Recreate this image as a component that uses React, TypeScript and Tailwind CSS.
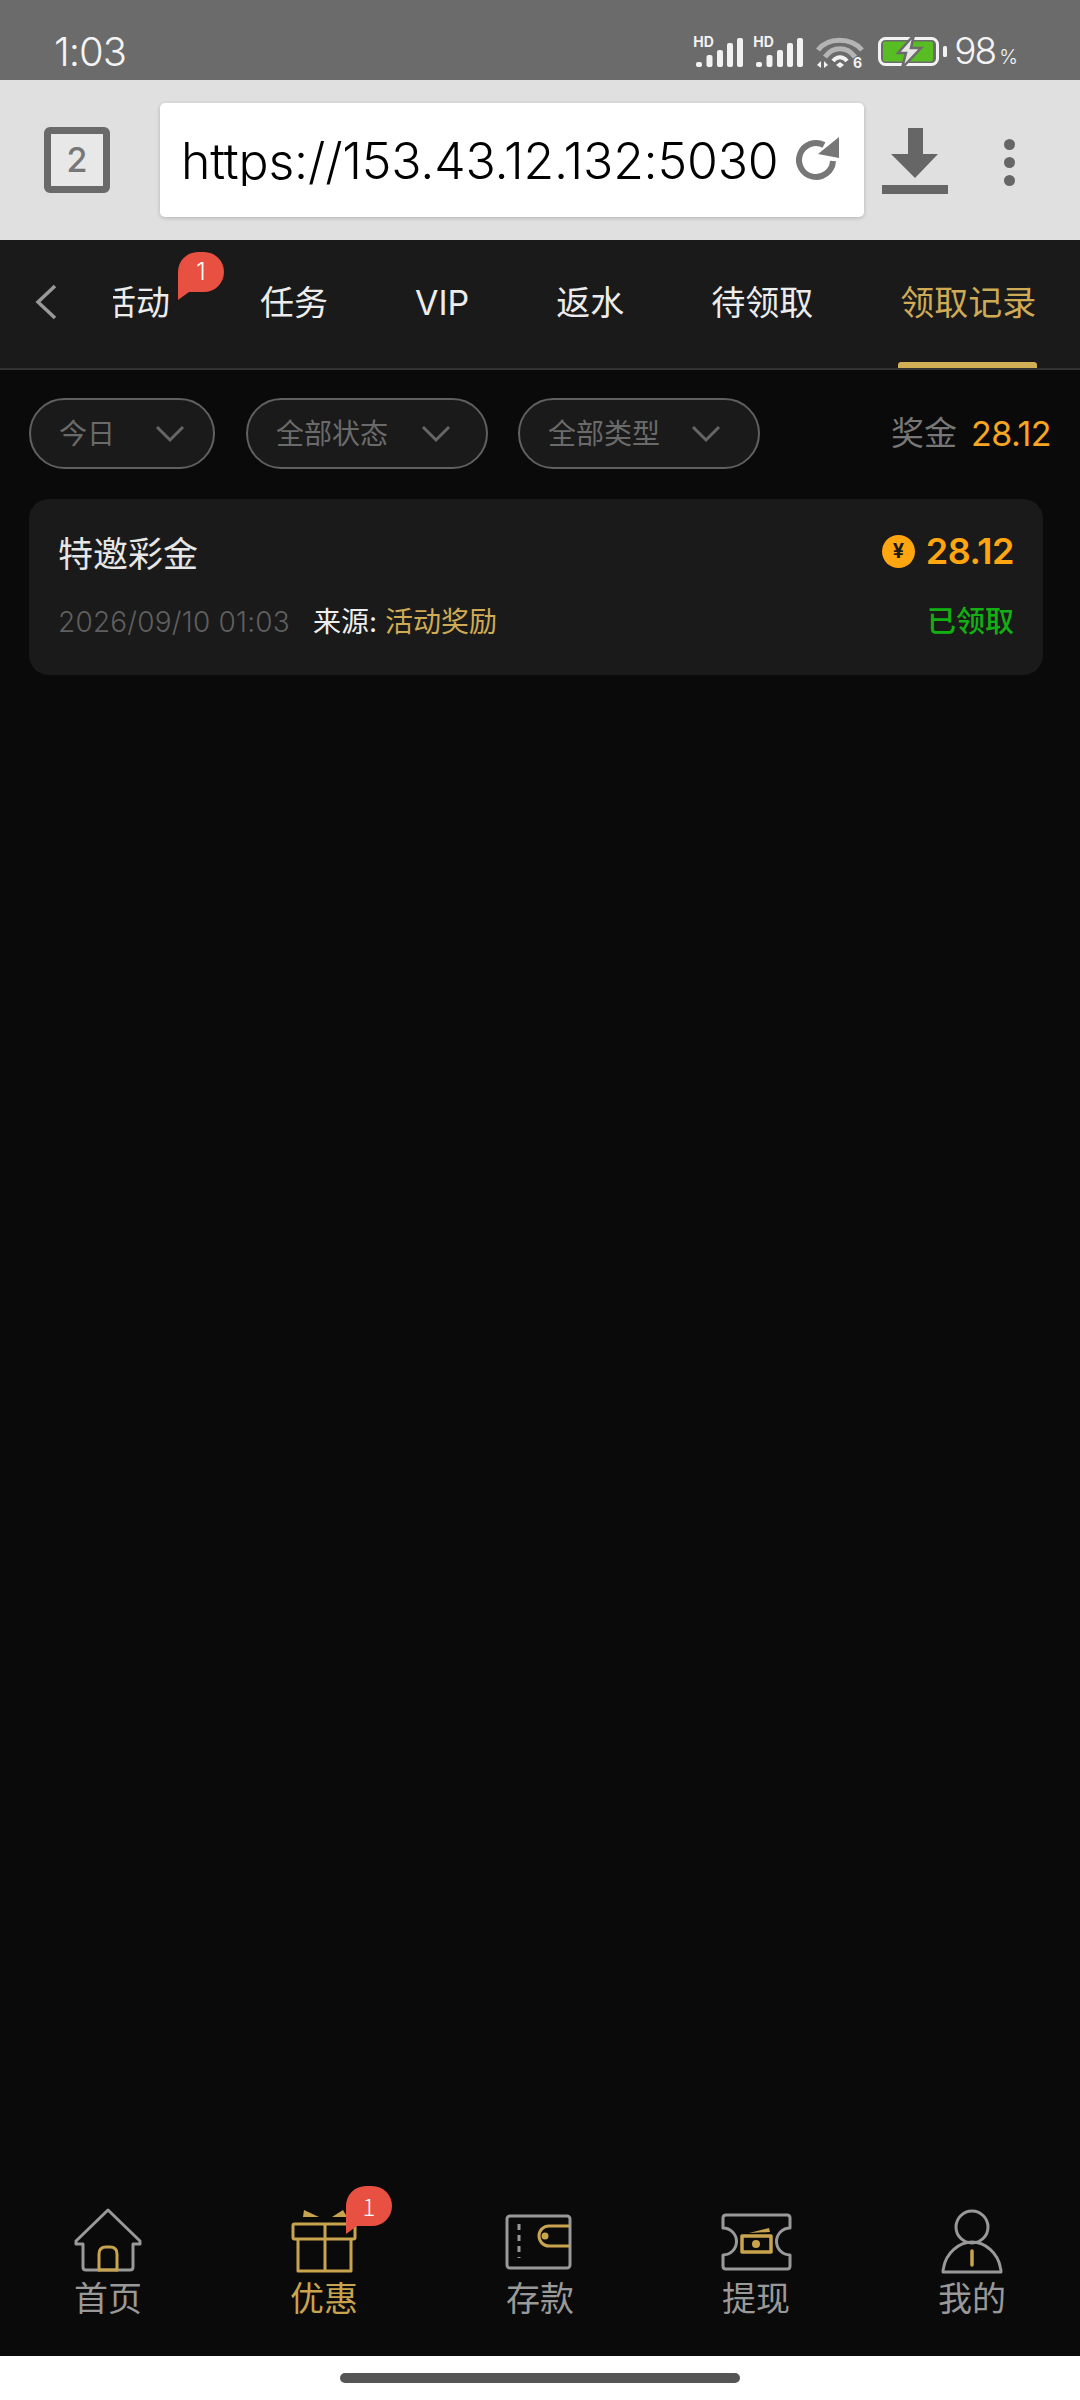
const latin = 'font-["Inter","Noto_Sans_CJK_SC",sans-serif]';

function Bubble({ className }: { className: string }) {
  return (
    <div className={`absolute w-[46px] h-[48px] ${className}`}>
      <svg width="46" height="48" viewBox="0 0 46 48" className="block">
        <path d="M0 48V20A20 20 0 0 1 20 0H26A20 20 0 0 1 46 20A20 20 0 0 1 26 40H11Z" fill="#e85141" />
      </svg>
      <span className="absolute left-0 top-0 w-[46px] h-[40px] flex items-center justify-center text-white text-[24px] leading-none font-light">1</span>
    </div>
  );
}

function Signal() {
  return (
    <div className="relative w-[50px] h-[32px]">
      <span className="absolute left-[0px] top-[0px] text-[14px] leading-[12px] font-bold text-[#f2f2f2] font-['Inter',sans-serif]">HD</span>
      <svg width="50" height="32" viewBox="0 0 50 32" className="block">
        <g fill="#f2f2f2">
          <rect x="3" y="26" width="6" height="5" rx="2" />
          <rect x="13.500" y="19" width="6" height="12" rx="2" />
          <rect x="24" y="14" width="6" height="17" rx="2" />
          <rect x="34" y="7" width="6" height="24" rx="2" />
          <rect x="44" y="2" width="6" height="29" rx="2" />
        </g>
      </svg>
    </div>
  );
}

function StatusBar() {
  return (
    <div className={`h-[80px] bg-[#6b6b6b] flex items-start justify-between pt-[31px] pl-[54px] pr-[62px] ${latin}`}>
      <span className="text-[40px] leading-[42px] font-light text-[#f4f4f4] tracking-[-1px]">1:03</span>
      <div className="flex items-start pt-[5px]">
        <Signal />
        <div className="ml-[10px]"><Signal /></div>
        <svg width="48" height="34" viewBox="0 0 48 34" className="block ml-[13px] mt-[-1px]">
          <path d="M2 15C12 2 35 2 46 15" fill="none" stroke="#b4b4b4" strokeWidth="5" />
          <path d="M9 22C17 11 31 11 39 22" fill="none" stroke="#b4b4b4" strokeWidth="5" />
          <path d="M17 26C21 21 27 21 31 26" fill="none" stroke="#f2f2f2" strokeWidth="4" />
          <path d="M20 30L24 27L28 30L24 33Z" fill="#f2f2f2" />
          <path d="M1 30L5 26V33ZM8 33V26L12 30Z" fill="#f2f2f2" />
          <text x="37" y="33" fontSize="14" fontWeight="700" fill="#f2f2f2">6</text>
        </svg>
        <svg width="69" height="33" viewBox="0 0 69 33" className="block ml-[14px] mt-[-1px]">
          <rect x="1.500" y="3.500" width="58" height="26" rx="6" fill="none" stroke="#f2f2f2" strokeWidth="3" />
          <rect x="5" y="6.500" width="50" height="20" rx="2" fill="#58bd22" />
          <rect x="65" y="11" width="4" height="11" rx="1.500" fill="#f2f2f2" />
          <path d="M36 0L20 18H28L24 33L43 13H33Z" fill="#e6e6e6" stroke="#6b6b6b" strokeWidth="2.500" />
        </svg>
        <span className="text-[37px] leading-[36px] font-light text-[#f4f4f4] whitespace-nowrap ml-[7px] mt-[-3px] tracking-[-2px]">
          98<span className="text-[20px] ml-[4px] tracking-normal">%</span>
        </span>
      </div>
    </div>
  );
}

function Toolbar() {
  return (
    <div className={`h-[160px] bg-[#e0e0e0] flex items-center ${latin}`}>
      <div className="ml-[44px] w-[66px] h-[66px] border-[7px] border-[#6a6a6a] rounded-[6px] flex items-center justify-center bg-[#e8e8e8]">
        <span className="text-[34px] leading-none font-medium text-[#777]">2</span>
      </div>
      <div className="ml-[50px] w-[704px] h-[114px] bg-white rounded-[5px] shadow-[0_1px_4px_rgba(0,0,0,0.2)] flex items-center pl-[21px] pr-[24px] overflow-hidden">
        <span className="flex-1 text-[50px] leading-none text-black whitespace-nowrap overflow-hidden font-light tracking-[-0.2px] pt-[2px]">https://153.43.12.132:5030</span>
        <svg width="46" height="46" viewBox="0 0 46 46" className="block shrink-0 ml-[16px]">
          <path d="M39 24A17 17 0 1 1 30 8" fill="none" stroke="#777" strokeWidth="6" />
          <path d="M24 17L45 0V21Z" fill="#777" />
        </svg>
      </div>
      <svg width="68" height="68" viewBox="0 0 68 68" className="block ml-[17px] mt-[4px]">
        <path d="M27 0H42V26H57L34 50L10 26H27Z" fill="#666" />
        <rect x="1" y="57" width="66" height="9" fill="#666" />
      </svg>
      <div className="ml-[55px] flex flex-col gap-[7px] mt-[5px]">
        <span className="w-[11px] h-[11px] rounded-full bg-[#666]" />
        <span className="w-[11px] h-[11px] rounded-full bg-[#666]" />
        <span className="w-[11px] h-[11px] rounded-full bg-[#666]" />
      </div>
    </div>
  );
}

const tabs = ["任务", "VIP", "返水", "待领取"];

function TabNav() {
  return (
    <div className={`relative h-[130px] bg-[#1a1a1a] border-b-2 border-[#333] flex ${latin}`}>
      <div className="w-[113px] shrink-0 flex items-center pl-[34px] pb-[4px]">
        <svg width="24" height="36" viewBox="0 0 24 36" className="block">
          <path d="M21 2L4 18L21 34" fill="none" stroke="#999" strokeWidth="3.500" />
        </svg>
      </div>
      <div className="flex-1 overflow-hidden flex h-[128px] text-[34px] leading-none text-[#ececec] font-normal pr-[40px]">
        <div className="relative ml-[-11px] w-[68px] shrink-0 flex items-center justify-center pb-[2px] whitespace-nowrap">活动</div>
        <div className="flex gap-[87px] ml-[90px]">
          {tabs.map((t) => (
            <div key={t} className="flex items-center pb-[2px] whitespace-nowrap">{t}</div>
          ))}
          <div className="relative flex items-center pb-[2px] whitespace-nowrap text-[#cfab55]">
            领取记录
            <span className="absolute left-[-2px] right-[-1px] bottom-0 h-[6px] rounded-t-[3px] bg-[#d2ae55]" />
          </div>
        </div>
      </div>
      <Bubble className="left-[178px] top-[12px]" />
    </div>
  );
}

function Chevron() {
  return (
    <svg width="30" height="18" viewBox="0 0 30 18" className="block">
      <path d="M2 2L15 15L28 2" fill="none" stroke="#666" strokeWidth="3" />
    </svg>
  );
}

function Pill({ label, width, gap }: { label: string; width: string; gap: string }) {
  return (
    <div className={`${width} h-[71px] rounded-full border-2 border-[#606060] bg-[#1a1a1a] flex items-center pl-[28px]`}>
      <span className="text-[28px] leading-none text-[#6a6a6a] font-normal whitespace-nowrap">{label}</span>
      <div className={gap}><Chevron /></div>
    </div>
  );
}

function Filters() {
  return (
    <div className="flex items-center pt-[28px] pl-[29px] pr-[29px]">
      <Pill label="今日" width="w-[186px]" gap="ml-[40px]" />
      <div className="ml-[31px]"><Pill label="全部状态" width="w-[242px]" gap="ml-[33px]" /></div>
      <div className="ml-[30px]"><Pill label="全部类型" width="w-[242px]" gap="ml-[31px]" /></div>
      <div className="ml-auto flex items-center gap-[14px] whitespace-nowrap">
        <span className="text-[33px] leading-none text-[#777] font-normal">奖金</span>
        <span className="text-[34px] leading-none text-[#f5a623] font-normal tracking-[-0.5px]">28.12</span>
      </div>
    </div>
  );
}

function RecordCard() {
  return (
    <div className="mt-[30px] ml-[29px] mr-[37px] h-[176px] rounded-[20px] bg-[#1a1a1a] pl-[29px] pr-[29px] flex flex-col">
      <div className="flex items-center justify-between h-[72px] mt-[19px]">
        <span className="text-[35px] leading-none text-[#e6e6e6] font-normal">特邀彩金</span>
        <div className="flex items-center gap-[11px] mt-[-6px]">
          <span className="w-[33px] h-[33px] rounded-full bg-[#ffa50f] flex items-center justify-center text-[20px] leading-none font-bold text-[#1a1a1a]">¥</span>
          <span className="text-[36px] leading-none font-semibold text-[#ffa50f] tracking-[-0.5px]">28.12</span>
        </div>
      </div>
      <div className="flex items-center justify-between mt-[17px]">
        <div className="flex items-center whitespace-nowrap">
          <span className="text-[28px] leading-none text-[#5f5f5f] font-light w-[255px] tracking-[0.2px]">2026/09/10 01:03</span>
          <span className="text-[28px] leading-none text-[#eeeeee] font-normal">来源:</span>
          <span className="text-[28px] leading-none text-[#cfab55] font-normal ml-[8px]">活动奖励</span>
        </div>
        <span className="text-[29px] leading-none font-medium text-[#12b012]">已领取</span>
      </div>
    </div>
  );
}

const gold = "#c9a44e";
const grey = "#999";

function HomeIcon() {
  return (
    <svg width="80" height="68" viewBox="0 0 80 68" className="block" fill="none" strokeWidth="3" strokeLinejoin="round" strokeLinecap="round">
      <path d="M15 36H8V33L40 2L72 33V36H65V59Q65 62 62 62H18Q15 62 15 59Z" stroke={grey} />
      <path d="M31 62V46Q31 39 38 39H42Q49 39 49 46V62" stroke={gold} />
      <path d="M31 62H49" stroke={gold} />
    </svg>
  );
}

function GiftIcon() {
  return (
    <svg width="80" height="68" viewBox="0 0 80 68" className="block" fill="none" stroke={gold} strokeWidth="3" strokeLinejoin="round">
      <rect x="9" y="16" width="62" height="15" rx="1.500" />
      <path d="M14 31V63H67V31M41 16V63" />
      <path d="M20 2L35 9H19Z" fill={gold} stroke="none" />
      <path d="M59 2L48 9H63Z" fill={gold} stroke="none" />
    </svg>
  );
}

function WalletIcon() {
  return (
    <svg width="80" height="68" viewBox="0 0 80 68" className="block" fill="none" strokeWidth="3">
      <rect x="7" y="8" width="63" height="52" rx="3" stroke={grey} />
      <path d="M19 16V50" stroke={grey} strokeDasharray="6 5" />
      <path d="M70 18H49A10 10 0 0 0 49 38H70" stroke={gold} />
      <circle cx="45" cy="28" r="3.500" fill={gold} />
    </svg>
  );
}

function TicketIcon() {
  return (
    <svg width="80" height="68" viewBox="0 0 80 68" className="block" fill="none" strokeWidth="3" strokeLinejoin="round">
      <path d="M10 7H71Q74 7 74 10V20A13.500 13.500 0 0 0 74 47V58Q74 61 71 61H10Q7 61 7 58V47A13.500 13.500 0 0 0 7 20V10Q7 7 10 7Z" stroke={grey} />
      <rect x="26" y="28" width="29" height="16" stroke={gold} strokeWidth="3.500" fill="none" />
      <circle cx="40" cy="36" r="4" fill={gold} />
      <path d="M33 25L53 20L54 24Z" fill={gold} />
    </svg>
  );
}

function PersonIcon() {
  return (
    <svg width="80" height="68" viewBox="0 0 80 68" className="block" fill="none" strokeWidth="3" strokeLinejoin="round">
      <circle cx="40" cy="19" r="16" stroke={grey} />
      <path d="M11 64Q11 62 11.500 60C14 45 27 34 40 34C53 34 66 45 68.500 60Q69 62 69 64Z" stroke={grey} />
      <path d="M40 43V57" stroke={gold} strokeWidth="3.500" strokeLinecap="round" />
    </svg>
  );
}

const navItems = [
  { label: "首页", Icon: HomeIcon },
  { label: "优惠", Icon: GiftIcon, active: true },
  { label: "存款", Icon: WalletIcon },
  { label: "提现", Icon: TicketIcon },
  { label: "我的", Icon: PersonIcon },
];

function BottomNav() {
  return (
    <nav className="grid grid-cols-5 pb-[40px] bg-[#0a0a0a]">
      {navItems.map(({ label, Icon, active }) => (
        <div key={label} className="relative flex flex-col items-center">
          <Icon />
          <span className={`mt-[2px] text-[34px] leading-[38px] font-normal ${active ? "text-[#c9a44e]" : "text-[#999]"}`}>{label}</span>
          {active && <Bubble className="left-[130px] top-[-22px]" />}
        </div>
      ))}
    </nav>
  );
}

export default function App() {
  return (
    <div className={`w-[1080px] h-[2400px] flex flex-col bg-[#0a0a0a] overflow-hidden font-['Noto_Sans_CJK_SC',sans-serif]`}>
      <StatusBar />
      <Toolbar />
      <TabNav />
      <main className="flex-1 flex flex-col font-['Inter','Noto_Sans_CJK_SC',sans-serif]">
        <Filters />
        <RecordCard />
      </main>
      <BottomNav />
      <div className="h-[44px] bg-white flex justify-center pt-[17px]">
        <span className="block w-[400px] h-[10px] rounded-full bg-[#555]" />
      </div>
    </div>
  );
}
